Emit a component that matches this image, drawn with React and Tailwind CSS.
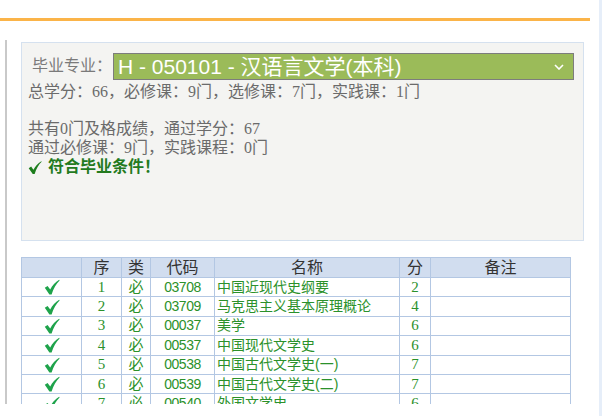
import React from "react";

const rows = [
  ["1", "必", "03708", "中国近现代史纲要", "2"],
  ["2", "必", "03709", "马克思主义基本原理概论", "4"],
  ["3", "必", "00037", "美学", "6"],
  ["4", "必", "00537", "中国现代文学史", "6"],
  ["5", "必", "00538", "中国古代文学史(一)", "7"],
  ["6", "必", "00539", "中国古代文学史(二)", "7"],
  ["7", "必", "00540", "外国文学史", "6"],
];

function Check({ className }) {
  return (
    <svg viewBox="0 0 16 16" className={className}>
      <path
        d="M0.8 8.8 L3.6 6.9 L6.2 10.6 C8.4 6.4 11.2 3.2 15.2 0.8 L15.6 1.4 C12.2 4.6 9.4 9.4 7.6 15.4 L5.4 15.4 Z"
        fill="currentColor"
      />
    </svg>
  );
}

export default function App() {
  const serif = { fontFamily: '"Liberation Serif", "Noto Sans CJK SC", serif' };
  const b = "border border-[#b3c7e3] p-0";
  return (
    <div className="w-[604px] h-[416px] bg-white overflow-hidden flex">
      <div className="w-[599px] flex flex-col">
        <div className="h-[18px]" />
        <div className="h-[3px] w-[590px] bg-[#fbb449]" />
        <div className="h-[19px]" />
        <div className="ml-[5px] h-[364px] border-l-[2px] border-[#c9c9c9] pl-[14px] pt-[2px] overflow-hidden">
          <div
            className="w-[563px] h-[199px] border border-[#d5e1ef] bg-[#f4f4f2] pt-[10px] text-[16px] leading-[18.7px] text-[#6b6b6b]"
            style={serif}
          >
            <div className="flex items-center pl-[10px]">
              <span className="w-[81px] text-[#7a7a7a]">毕业专业：</span>
              <div className="w-[461px] h-[27px] bg-[#9bbb59] border border-[#7d7d7d] flex items-center justify-between pl-[4px] pr-[9px]">
                <span
                  className="text-white text-[21px] leading-none"
                  style={{ fontFamily: '"Liberation Sans", "Noto Sans CJK SC", sans-serif' }}
                >
                  H - 050101 - 汉语言文学(本科)
                </span>
                <svg viewBox="0 0 10 6" className="w-[10px] h-[6px]">
                  <polyline points="1,1 5,5 9,1" fill="none" stroke="white" strokeWidth="1.6" />
                </svg>
              </div>
            </div>
            <div className="pl-[6px] pt-[3px]">
              <div>总学分：66，必修课：9门，选修课：7门，实践课：1门</div>
              <div>&nbsp;</div>
              <div>共有0门及格成绩，通过学分：67</div>
              <div>通过必修课：9门，实践课程：0门</div>
              <div className="flex items-center font-bold text-[#237a1e]">
                <Check className="w-[14px] h-[15px] text-[#1c7d1c] mr-[6px]" />
                <span>符合毕业条件！</span>
              </div>
            </div>
          </div>
          <div className="h-[16px]" />
          <table
            className="table-fixed border-collapse w-[549px] text-[14px]"
            style={{ fontFamily: '"Liberation Sans", "Noto Sans CJK SC", sans-serif' }}
          >
            <colgroup>
              <col className="w-[60px]" />
              <col className="w-[40px]" />
              <col className="w-[29px]" />
              <col className="w-[64px]" />
              <col className="w-[185px]" />
              <col className="w-[31px]" />
              <col className="w-[140px]" />
            </colgroup>
            <thead>
              <tr className="bg-[#d1ddef] h-[20px] text-[16px] leading-[18px] text-[#333]">
                <th className={`${b} font-normal`}></th>
                <th className={`${b} font-normal`}>序</th>
                <th className={`${b} font-normal`}>类</th>
                <th className={`${b} font-normal`}>代码</th>
                <th className={`${b} font-normal`}>名称</th>
                <th className={`${b} font-normal`}>分</th>
                <th className={`${b} font-normal`}>备注</th>
              </tr>
            </thead>
            <tbody className="text-[#2b912b]">
              {rows.map((r) => (
                <tr key={r[0]} className="h-[19.4px] leading-[17px]">
                  <td className={b}>
                    <div className="flex justify-center">
                      <Check className="w-[16px] h-[16px] text-[#1ea34b]" />
                    </div>
                  </td>
                  <td className={`${b} text-center text-[15px]`} style={serif}>{r[0]}</td>
                  <td className={`${b} text-center text-[15px]`} style={serif}>{r[1]}</td>
                  <td className={`${b} text-center text-[14px] tracking-[-0.5px]`}>{r[2]}</td>
                  <td className={`${b} pl-[2px] text-[14px]`}>{r[3]}</td>
                  <td className={`${b} text-center text-[15px]`} style={serif}>{r[4]}</td>
                  <td className={b}></td>
                </tr>
              ))}
            </tbody>
          </table>
        </div>
      </div>
      <div className="w-[3px] bg-[#e6eef9]" />
    </div>
  );
}
